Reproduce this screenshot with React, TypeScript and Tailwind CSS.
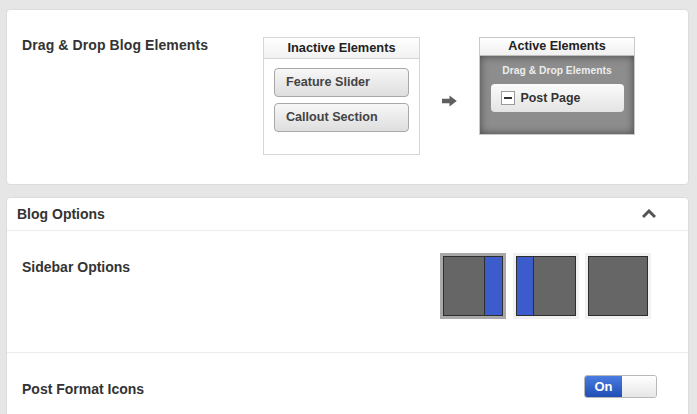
import React from "react";

const font = { fontFamily: '"Liberation Sans", Arial, sans-serif' };

function Thumb({ side, selected }: { side: "right" | "left" | "none"; selected?: boolean }) {
  return (
    <div
      className={
        "w-[66px] h-[66px] p-[3px] " +
        (selected ? "bg-[#a9a9a9]" : "bg-[#f1f1f1]")
      }
    >
      <div className="w-full h-full border border-[#2e2e2e] bg-[#666666] flex">
        {side === "left" && <div className="w-[17px] h-full bg-[#3d5ccc] border-r border-[#2e2e2e]" />}
        <div className="flex-1" />
        {side === "right" && <div className="w-[18px] h-full bg-[#3d5ccc] border-l border-[#2e2e2e]" />}
      </div>
    </div>
  );
}

export default function App() {
  return (
    <div
      style={font}
      className="w-[697px] h-[414px] overflow-hidden bg-[#e6e6e6] pt-[9px] pl-[6px] pr-[8px] text-[#333333]"
    >
      {/* Card 1 */}
      <div className="h-[176px] bg-white rounded-[4px] border border-[#dcdcdc] flex items-start pl-[15px] pt-[27px]">
        <div className="w-[241px] -mt-[2px] text-[14px] leading-[20px] font-bold text-[#333] tracking-[0.1px]">
          Drag &amp; Drop Blog Elements
        </div>
        {/* Inactive */}
        <div className="w-[157px] h-[118px] border border-[#d6d6d6] bg-white flex flex-col">
          <div className="h-[21px] border-b border-[#d6d6d6] bg-gradient-to-b from-white to-[#f1f1f1] flex items-center justify-center text-[12.8px] font-bold text-[#222]">
            Inactive Elements
          </div>
          <div className="pl-[10px] pt-[9px] flex flex-col gap-[6px]">
            <div className="w-[135px] h-[29px] rounded-[4px] border border-[#a8a8a8] bg-gradient-to-b from-[#f7f7f7] to-[#dedede] flex items-center pl-[11px] text-[12.6px] font-bold text-[#444]">
              Feature Slider
            </div>
            <div className="w-[135px] h-[29px] rounded-[4px] border border-[#a8a8a8] bg-gradient-to-b from-[#f7f7f7] to-[#dedede] flex items-center pl-[11px] text-[12.6px] font-bold text-[#444]">
              Callout Section
            </div>
          </div>
        </div>
        {/* Arrow */}
        <div className="ml-[22px] mt-[58px] w-[15px] h-[12px]">
          <svg width="15" height="12" viewBox="0 0 15 12">
            <path d="M0 3.8 H7.5 V0.5 L14.8 6 L7.5 11.5 V8.2 H0 Z" fill="#5f5f5f" />
          </svg>
        </div>
        {/* Active */}
        <div className="ml-[22px] w-[156px] h-[98px] border border-[#c8c8c8] flex flex-col">
          <div className="h-[18px] border-b border-[#bdbdbd] bg-gradient-to-b from-white to-[#f0f0f0] flex items-center justify-center text-[12.6px] font-bold text-[#222]">
            Active Elements
          </div>
          <div className="flex-1 bg-[#8d8d8d] shadow-[inset_0_0_9px_rgba(0,0,0,0.5)] flex flex-col items-center">
            <div className="mt-[8px] text-[10.3px] leading-[14px] font-bold text-[#ececec]">
              Drag &amp; Drop Elements
            </div>
            <div className="mt-[6px] w-[133px] h-[28px] rounded-[4px] bg-gradient-to-b from-[#fbfbfb] to-[#e4e4e4] flex items-center pl-[10px] gap-[6px]">
              <div className="w-[14px] h-[14px] border border-[#9a9a9a] bg-white flex items-center justify-center">
                <div className="w-[8px] h-[2px] bg-[#333]" />
              </div>
              <span className="text-[12.4px] font-bold text-[#333]">Post Page</span>
            </div>
          </div>
        </div>
      </div>

      {/* Card 2 */}
      <div className="mt-[12px] h-[230px] bg-white rounded-t-[4px] border border-[#dcdcdc] flex flex-col">
        <div className="h-[33px] border-b border-[#ececec] flex items-center justify-between pl-[10px] pr-[32px]">
          <span className="text-[14px] font-bold text-[#333]">Blog Options</span>
          <svg width="14" height="10" viewBox="0 0 14 10">
            <path d="M1 8 L7 2 L13 8" fill="none" stroke="#555" strokeWidth="3" />
          </svg>
        </div>
        <div className="h-[122px] border-b border-[#ececec] flex items-start justify-between pl-[15px] pr-[37px] pt-[22px]">
          <div className="mt-[4px] text-[14px] leading-[20px] font-bold">Sidebar Options</div>
          <div className="flex gap-[6.5px]">
            <Thumb side="right" selected />
            <Thumb side="left" />
            <Thumb side="none" />
          </div>
        </div>
        <div className="flex items-start justify-between pl-[15px] pr-[31px] pt-[22px]">
          <div className="mt-[4px] text-[14px] leading-[20px] font-bold">Post Format Icons</div>
          <div className="w-[73px] h-[23px] rounded-[3px] border border-[#b8b8b8] flex overflow-hidden">
            <div className="w-[37px] h-full bg-gradient-to-b from-[#4a7be0] to-[#1f4fb5] flex items-center justify-center text-[13px] font-bold text-white">
              On
            </div>
            <div className="flex-1 bg-gradient-to-b from-white to-[#e6e6e6]" />
          </div>
        </div>
      </div>
    </div>
  );
}
